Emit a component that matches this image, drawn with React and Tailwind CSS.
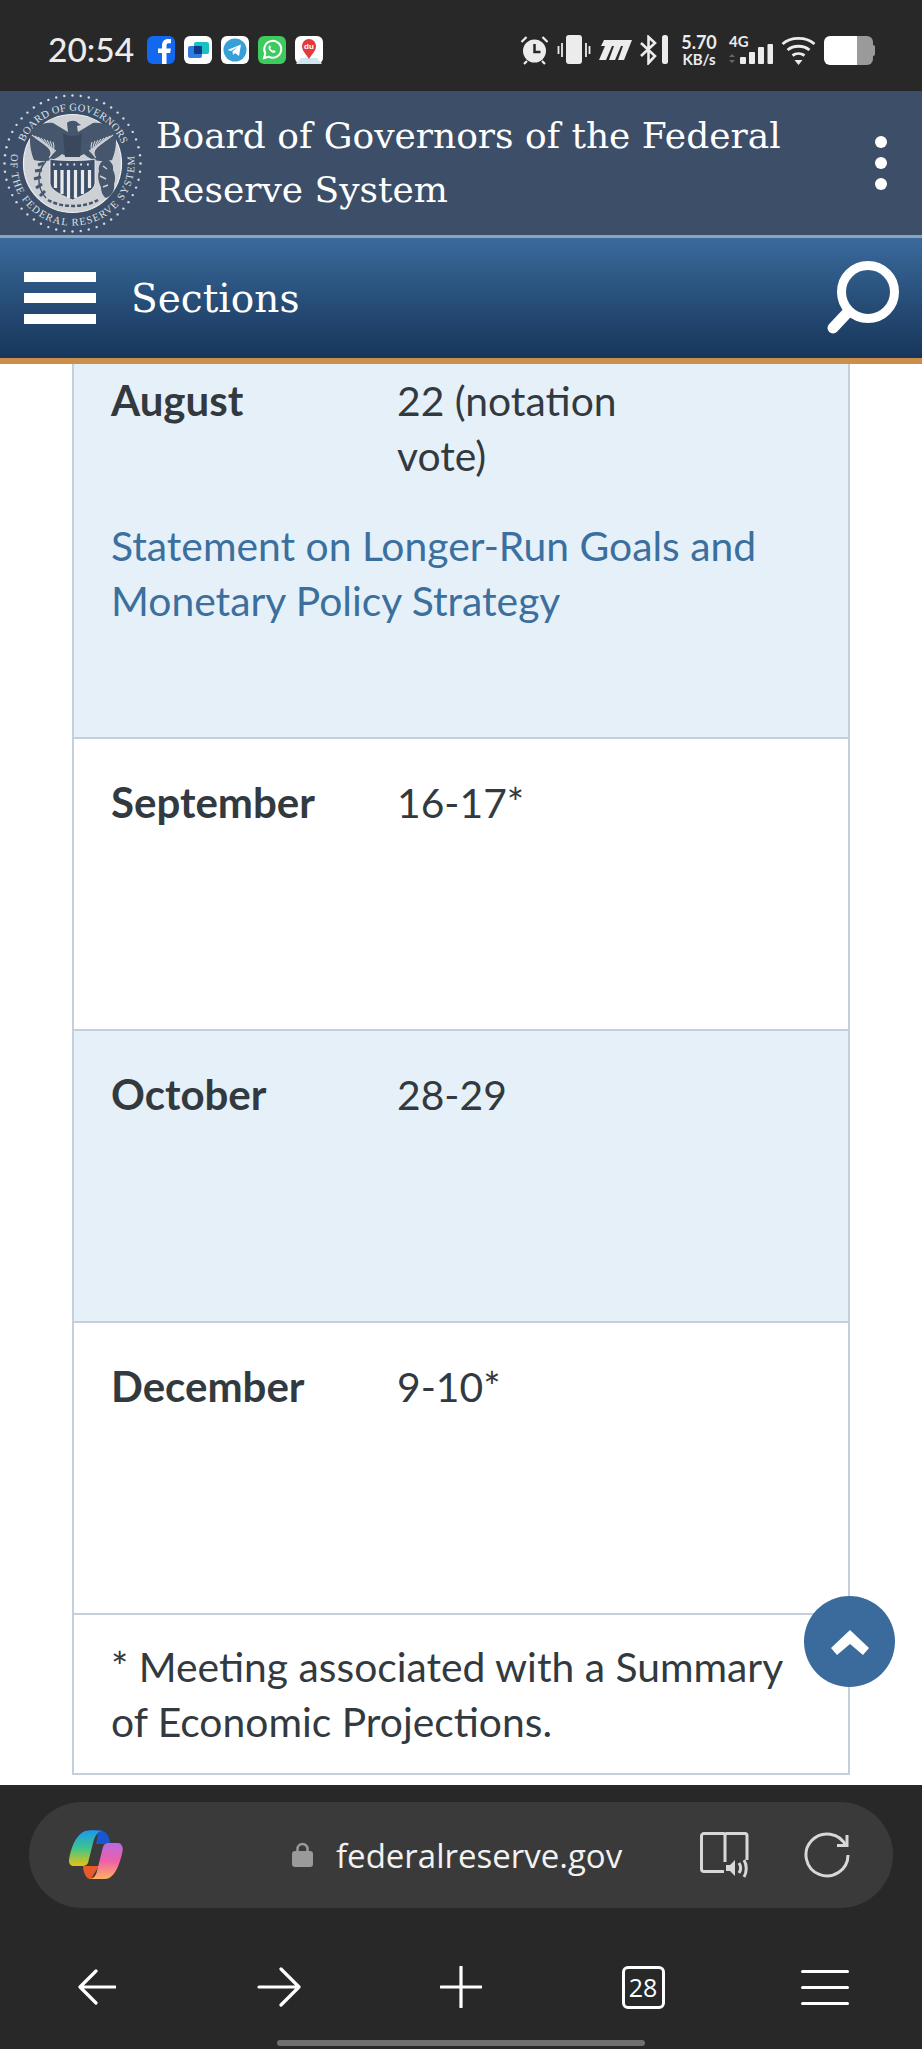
const dots = Array.from({ length: 52 }, (_, i) => (i / 52) * Math.PI * 2)
const wingLines = [0, 1, 2, 3, 4, 5, 6, 7]

function Seal() {
  return (
    <svg width="145" height="145" viewBox="0 0 145 145" className="shrink-0">
      {dots.map((a, i) => (
        <circle key={i} cx={72.5 + Math.cos(a) * 68} cy={72.5 + Math.sin(a) * 68} r="1.2" fill="#d5d9de" />
      ))}
      <defs>
        <path id="sealTop" d="M 24.100 51 A 53 53 0 0 1 120.900 51" />
        <path id="sealBottom" d="M 11.300 62.800 A 62 62 0 1 0 133.700 62.800" />
      </defs>
      <text fontFamily="'Liberation Serif', serif" fontSize="10.500" fill="#dfe2e6">
        <textPath href="#sealTop" textLength="124">BOARD OF GOVERNORS</textPath>
      </text>
      <text fontFamily="'Liberation Serif', serif" fontSize="10.500" fill="#dfe2e6">
        <textPath href="#sealBottom" textLength="212">OF THE FEDERAL RESERVE SYSTEM</textPath>
      </text>
      <circle cx="72.500" cy="72.500" r="49" fill="#cdd1d6" stroke="#eef0f2" strokeWidth="1.200" />
      {/* eagle */}
      <path d="M67 32c3-3 9-3 11 0l3 2-4 1 1 6 15-9c10-1 18 3 22 8 2 8 1 20-3 29-8 2-20 2-28-6l-6 3h-10l-6-3c-8 8-20 8-28 6-4-9-5-21-3-29 4-5 12-9 22-8l15 9z" fill="#46566c" />
      {wingLines.map((n) => (
        <path key={n} d={`M${32 + n * 3} ${44 + n}Q${42 + n * 2} ${52 + n} ${56 - n} ${60 + n}M${113 - n * 3} ${44 + n}Q${103 - n * 2} ${52 + n} ${89 + n} ${60 + n}`} fill="none" stroke="#cdd1d6" strokeWidth="1.100" />
      ))}
      <path d="M63 42c4 4 15 4 19 0l-2 24H65z" fill="#39485d" />
      {/* shield */}
      <path d="M50 68c8 2 37 2 45 0v24c0 8-14 13-22.500 17C64 105 50 100 50 92z" fill="#3d4f68" stroke="#eef0f2" strokeWidth="0.800" />
      <path d="M55.500 79v18M62 79v24M68.500 79v28M75.500 79v28M82.500 79v24M89.500 79v18" stroke="#e8eaed" strokeWidth="3.200" />
      <path d="M53 73.500h40" stroke="#e8eaed" strokeWidth="1.800" strokeDasharray="1.800 5" />
      {/* laurel and oak */}
      <path d="M46 70c-9 10-10 26 0 37" fill="none" stroke="#46566c" strokeWidth="1.500" />
      <path d="M44 72l-6 2M42 79l-7 1M41 86l-7 2M42 93l-6 4M45 100l-5 5" stroke="#46566c" strokeWidth="3" />
      <path d="M106 68c-6 2-8 8-7 12-2 6 0 12 2 16 0 5 2 9 5 11 6-2 9-8 8-14 2-5 1-10-1-14 1-5-2-9-7-11z" fill="#46566c" />
      <path d="M103 75l4 3M100 85l6 3M103 96l5-2" stroke="#cdd1d6" strokeWidth="1.500" />
      <path d="M48 109c14 8 36 8 50 0" fill="none" stroke="#46566c" strokeWidth="2.500" strokeDasharray="4 2" />
    </svg>
  )
}

function AppIcons() {
  return (
    <div className="ml-[13px] flex gap-[9px]">
      <svg width="28" height="28" viewBox="0 0 28 28">
        <rect width="28" height="28" rx="6" fill="#1368f0" />
        <path d="M15 28V17h-4v-4.500h4V9.500c0-4 2.400-6.500 6-6.500h3v4.300h-2.300c-1.700 0-2.200.9-2.200 2.200v3h4.400l-.7 4.500h-3.700v11z" fill="#fff" />
      </svg>
      <svg width="28" height="28" viewBox="0 0 28 28">
        <rect width="28" height="28" rx="6" fill="#fff" />
        <rect x="10" y="6" width="15" height="12" rx="2" fill="#19c2c2" />
        <rect x="4" y="10" width="14" height="12" rx="2" fill="#2f7de0" />
        <rect x="10" y="10" width="8" height="8" rx="1" fill="#0e3a8a" />
      </svg>
      <svg width="28" height="28" viewBox="0 0 28 28">
        <rect width="28" height="28" rx="6" fill="#fff" />
        <circle cx="14" cy="14" r="11.500" fill="#37a0d8" />
        <path d="M6.500 14l13.500-5.500-2 11.500-4-3-2 2-.5-3.500 5-4.500-6.500 4z" fill="#fff" />
      </svg>
      <svg width="28" height="28" viewBox="0 0 28 28">
        <rect width="28" height="28" rx="6" fill="#3ecb5e" />
        <path d="M6 22l1.300-4.600a8.500 8.500 0 1 1 3.300 3.300z" fill="none" stroke="#fff" strokeWidth="2" />
        <path d="M11 10c-1 1-.8 3 1.200 5s4 2.300 5 1.200l.6-1-2-1.200-1 .8c-1-.4-2.200-1.600-2.500-2.500l.8-1-1.200-2z" fill="#fff" />
      </svg>
      <svg width="28" height="28" viewBox="0 0 28 28">
        <rect width="28" height="28" rx="6" fill="#fff" />
        <path d="M1 28l5-6h16l5 6z" fill="#cfe6ef" />
        <path d="M14 23c-3-5-7-8-7-13a7 7 0 0 1 14 0c0 5-4 8-7 13z" fill="#e23a3f" />
        <text x="14" y="13" textAnchor="middle" fontSize="8" fontWeight="700" fill="#fff" fontFamily="'Liberation Sans', sans-serif">du</text>
      </svg>
    </div>
  )
}

function StatusIcons() {
  return (
    <div className="flex items-center text-[#ececec]">
      <svg width="29" height="30" viewBox="0 0 29 30">
        <circle cx="14.500" cy="16" r="11.500" fill="#ececec" />
        <path d="M14.500 9v8h6" stroke="#282828" strokeWidth="2.500" fill="none" />
        <path d="M1.500 7l5-5M27.500 7l-5-5M4 29l3-3M25 29l-3-3" stroke="#ececec" strokeWidth="2.200" />
      </svg>
      <svg width="34" height="30" viewBox="0 0 34 30" className="ml-[8px]">
        <rect x="9" y="0" width="16" height="29" rx="3" fill="#ececec" />
        <path d="M1.500 11v8M5 8v14M29 8v14M32.500 11v8" stroke="#ececec" strokeWidth="1.800" />
      </svg>
      <svg width="33" height="20" viewBox="0 0 33 20" className="ml-[8px]">
        <path d="M5 0h28l-8 20h-6l5-14h-2l-6 14h-6l5-14h-2L7 20H0l6-14H2z" fill="#ececec" />
      </svg>
      <svg width="29" height="30" viewBox="0 0 29 30" className="ml-[7px]">
        <path d="M2 8l14 13-6.500 7V2L16 8 2 21" stroke="#ececec" strokeWidth="2.600" fill="none" />
        <rect x="23" y="0" width="6" height="29" rx="2.500" fill="#ececec" />
      </svg>
      <div className="ml-[13px] flex w-[36px] flex-col items-center font-['Lato',sans-serif] text-[18px] leading-[19px] font-bold">
        <span>5.70</span>
        <span className="text-[15px] leading-[15px]">KB/s</span>
      </div>
      <div className="relative ml-[12px] h-[34px] w-[44px]">
        <span className="absolute top-[2px] left-0 font-['Lato',sans-serif] text-[15px] leading-[13px] font-bold">4G</span>
        <svg width="44" height="34" viewBox="0 0 44 34" className="absolute top-0 left-0">
          <path d="M0 24l3-3 3 3zM0 27l3 3 3-3z" fill="#666" />
          <rect x="11" y="24" width="6" height="7" rx="1" fill="#ececec" />
          <rect x="20" y="19" width="6" height="12" rx="1" fill="#ececec" />
          <rect x="29" y="14" width="6" height="17" rx="1" fill="#ececec" />
          <rect x="38.500" y="11" width="5.500" height="20" rx="1" fill="#ececec" />
        </svg>
      </div>
      <svg width="35" height="30" viewBox="0 0 35 30" className="ml-[8px]">
        <path d="M1.500 9C10 1.500 25 1.500 33.500 9M6.500 15c6-5 16-5 22 0M11.500 20.500c3.500-2.500 8.500-2.500 12 0" stroke="#ececec" strokeWidth="2.800" fill="none" />
        <path d="M13.500 25h8l-4 5z" fill="#ececec" />
      </svg>
      <div className="ml-[8px] flex h-[29px] w-[51px] items-center">
        <div className="h-full w-[33px] rounded-l-[6px] bg-white" />
        <div className="h-full w-[16px] rounded-r-[6px] bg-[#9a9a9a]" />
        <div className="h-[11px] w-[2px] rounded-r-full bg-[#9a9a9a]" />
      </div>
    </div>
  )
}

function Row({ month, value, blue }) {
  return (
    <div className={`flex h-[292px] border-b-2 border-[#c3cfdc] px-[37px] pt-[36px] ${blue ? 'bg-[#e6f0f8]' : 'bg-white'}`}>
      <div className="w-[286px] text-[42px] font-bold">{month}</div>
      <div>{value}</div>
    </div>
  )
}

function Copilot() {
  return (
    <svg width="54" height="50" viewBox="0 0 54 50">
      <defs>
        <linearGradient id="copA" x1="0" y1="0" x2="0" y2="1">
          <stop offset="0" stopColor="#1a9af0" />
          <stop offset="0.5" stopColor="#3ec48c" />
          <stop offset="1" stopColor="#e8c410" />
        </linearGradient>
        <linearGradient id="copB" x1="0" y1="0" x2="0" y2="1">
          <stop offset="0" stopColor="#b86be0" />
          <stop offset="0.5" stopColor="#ef5fa8" />
          <stop offset="1" stopColor="#fdb260" />
        </linearGradient>
      </defs>
      <path d="M14 36h16l-8 13c-4 1-8-6-8-13z" fill="#e8592c" />
      <path d="M30 0c6 0 11 6 11 14H27z" fill="#1a56d0" />
      <path d="M16 1c3-1 14-1 16 0-3 1-6 4-8 12l-5 20c-1 2-3 3-6 3H5c-3 0-5-2-5-5 1-10 6-26 16-30z" fill="url(#copA)" />
      <path d="M53 16c1 2 1 3 0 8-3 12-8 25-17 25H20c4 0 7-3 8-8l6-24c1-3 3-4 6-4h9c2 0 3 1 4 3z" fill="url(#copB)" />
    </svg>
  )
}

export default function App() {
  return (
    <div className="flex h-[2049px] w-[922px] flex-col overflow-hidden bg-white font-['Lato',sans-serif] text-[40.800px] leading-[55px] text-[#333a3f]">
      {/* status bar */}
      <div className="flex h-[91px] shrink-0 items-center justify-between bg-[#282828] pt-[9px] pr-[47px] pl-[48px]">
        <div className="flex items-center">
          <span className="text-[33.500px] leading-none font-medium text-[#ececec]">20:54</span>
          <AppIcons />
        </div>
        <StatusIcons />
      </div>

      {/* site title */}
      <div className="flex h-[144px] shrink-0 items-center bg-[#3d4f68]">
        <Seal />
        <div className="ml-[11px] w-[660px] font-['DejaVu_Serif',serif] text-[36px] leading-[54px] text-white">
          Board of Governors of the Federal Reserve System
        </div>
        <div className="ml-[59px] flex flex-col gap-[9px]">
          <div className="size-[12px] rounded-full bg-white" />
          <div className="size-[12px] rounded-full bg-white" />
          <div className="size-[12px] rounded-full bg-white" />
        </div>
      </div>

      {/* sections nav */}
      <div className="flex h-[129px] shrink-0 items-center justify-between border-t-[3px] border-b-[6px] border-t-[#8aa3bf] border-b-[#cc8f4a] bg-gradient-to-b from-[#3a6a9c] to-[#17365a] pr-[22px] pl-[24px]">
        <div className="flex items-center">
          <div className="flex w-[72px] flex-col gap-[11px]">
            <div className="h-[10px] bg-white" />
            <div className="h-[10px] bg-white" />
            <div className="h-[10px] bg-white" />
          </div>
          <span className="ml-[35px] font-['DejaVu_Serif',serif] text-[39px] leading-none text-white">Sections</span>
        </div>
        <svg width="74" height="74" viewBox="0 0 74 74">
          <circle cx="42" cy="31" r="26.500" fill="none" stroke="#fff" strokeWidth="9" />
          <path d="M22 51L7 67" stroke="#fff" strokeWidth="11" strokeLinecap="round" />
        </svg>
      </div>

      {/* table */}
      <div className="relative min-h-0 flex-1">
        <div className="mx-[72px] w-[778px] border-x-2 border-b-2 border-[#c3cfdc]">
          <div className="h-[375px] border-b-2 border-[#c3cfdc] bg-[#e6f0f8] px-[37px] pt-[9px]">
            <div className="flex">
              <div className="w-[286px] text-[42px] font-bold">August</div>
              <div className="w-[260px]">22 (notation vote)</div>
            </div>
            <a className="mt-[35px] block text-[#3b6f9e]">Statement on Longer-Run Goals and Monetary Policy Strategy</a>
          </div>
          <Row month="September" value="16-17*" />
          <Row month="October" value="28-29" blue />
          <Row month="December" value="9-10*" />
          <div className="px-[37px] pt-[24px] pb-[24px]">* Meeting associated with a Summary of Economic Projections.</div>
        </div>
        <div className="absolute top-[1232px] left-[804px] flex size-[91px] items-center justify-center rounded-full bg-[#3a6b9c]">
          <svg width="40" height="26" viewBox="0 0 40 26">
            <path d="M20 1L39 19l-6 7-13-11L7 26l-6-7z" fill="#fff" />
          </svg>
        </div>
      </div>

      {/* browser bar */}
      <div className="relative h-[264px] shrink-0 bg-[#282828] pt-[17px]">
        <div className="mx-[29px] flex h-[106px] items-center rounded-[53px] bg-[#3a3a3a] pl-[40px]">
          <Copilot />
          <svg width="21" height="26" viewBox="0 0 21 26" className="ml-[169px]">
            <path d="M5.500 11V7a5 5 0 0 1 10 0v4" fill="none" stroke="#9a9a9a" strokeWidth="2.500" />
            <rect x="0" y="9" width="21" height="16" rx="3" fill="#9a9a9a" />
          </svg>
          <span className="ml-[23px] font-['Open_Sans',sans-serif] text-[33px] leading-none text-[#f2f2f2]">federalreserve.gov</span>
          <svg width="54" height="46" viewBox="0 0 54 46" className="ml-[78px]">
            <path d="M24 39.500H4A2.500 2.500 0 0 1 1.500 37V4A2.500 2.500 0 0 1 4 1.500h20.500M23 1.500a2 2 0 0 1 2 2V30M25 3.500a2 2 0 0 1 2-2h18a2 2 0 0 1 2 2V28" fill="none" stroke="#d8d8d8" strokeWidth="3" />
            <path d="M26 33h4l5-5v16l-5-5h-4z" fill="#d8d8d8" />
            <path d="M39 31c2 3 2 7 0 10M44 28c3 5 3 12 0 17" fill="none" stroke="#d8d8d8" strokeWidth="3" />
          </svg>
          <svg width="46" height="46" viewBox="0 0 46 46" className="ml-[50px]">
            <path d="M42 14A21 21 0 1 0 44 23" fill="none" stroke="#d8d8d8" strokeWidth="3" />
            <path d="M33 13.500h10V3" fill="none" stroke="#d8d8d8" strokeWidth="3" />
          </svg>
        </div>

        <div className="mt-[57px] grid grid-cols-5 px-[6px] text-white">
          <div className="flex h-[44px] items-center justify-center">
            <svg width="38" height="36" viewBox="0 0 38 36">
              <path d="M37 18H3M18 2L2 18l16 16" fill="none" stroke="#fff" strokeWidth="3.200" strokeLinecap="round" strokeLinejoin="round" />
            </svg>
          </div>
          <div className="flex h-[44px] items-center justify-center">
            <svg width="45" height="40" viewBox="0 0 45 40">
              <path d="M2 20h40M24 2l18 18-18 18" fill="none" stroke="#fff" strokeWidth="3.200" strokeLinecap="round" strokeLinejoin="round" />
            </svg>
          </div>
          <div className="flex h-[44px] items-center justify-center">
            <svg width="42" height="42" viewBox="0 0 42 42">
              <path d="M21 1v40M1 21h40" fill="none" stroke="#fff" strokeWidth="3.200" strokeLinecap="round" />
            </svg>
          </div>
          <div className="flex h-[44px] items-center justify-center">
            <div className="flex h-[43px] w-[43px] items-center justify-center rounded-[6px] border-[3px] border-white font-['Open_Sans',sans-serif] text-[25px] leading-none">28</div>
          </div>
          <div className="flex h-[44px] items-center justify-center">
            <div className="flex w-[48px] flex-col gap-[13px]">
              <div className="h-[3px] rounded-full bg-white" />
              <div className="h-[3px] rounded-full bg-white" />
              <div className="h-[3px] rounded-full bg-white" />
            </div>
          </div>
        </div>
        <div className="absolute bottom-[3px] left-[277px] h-[6px] w-[368px] rounded-full bg-[#6f6f6f]" />
      </div>
    </div>
  )
}
